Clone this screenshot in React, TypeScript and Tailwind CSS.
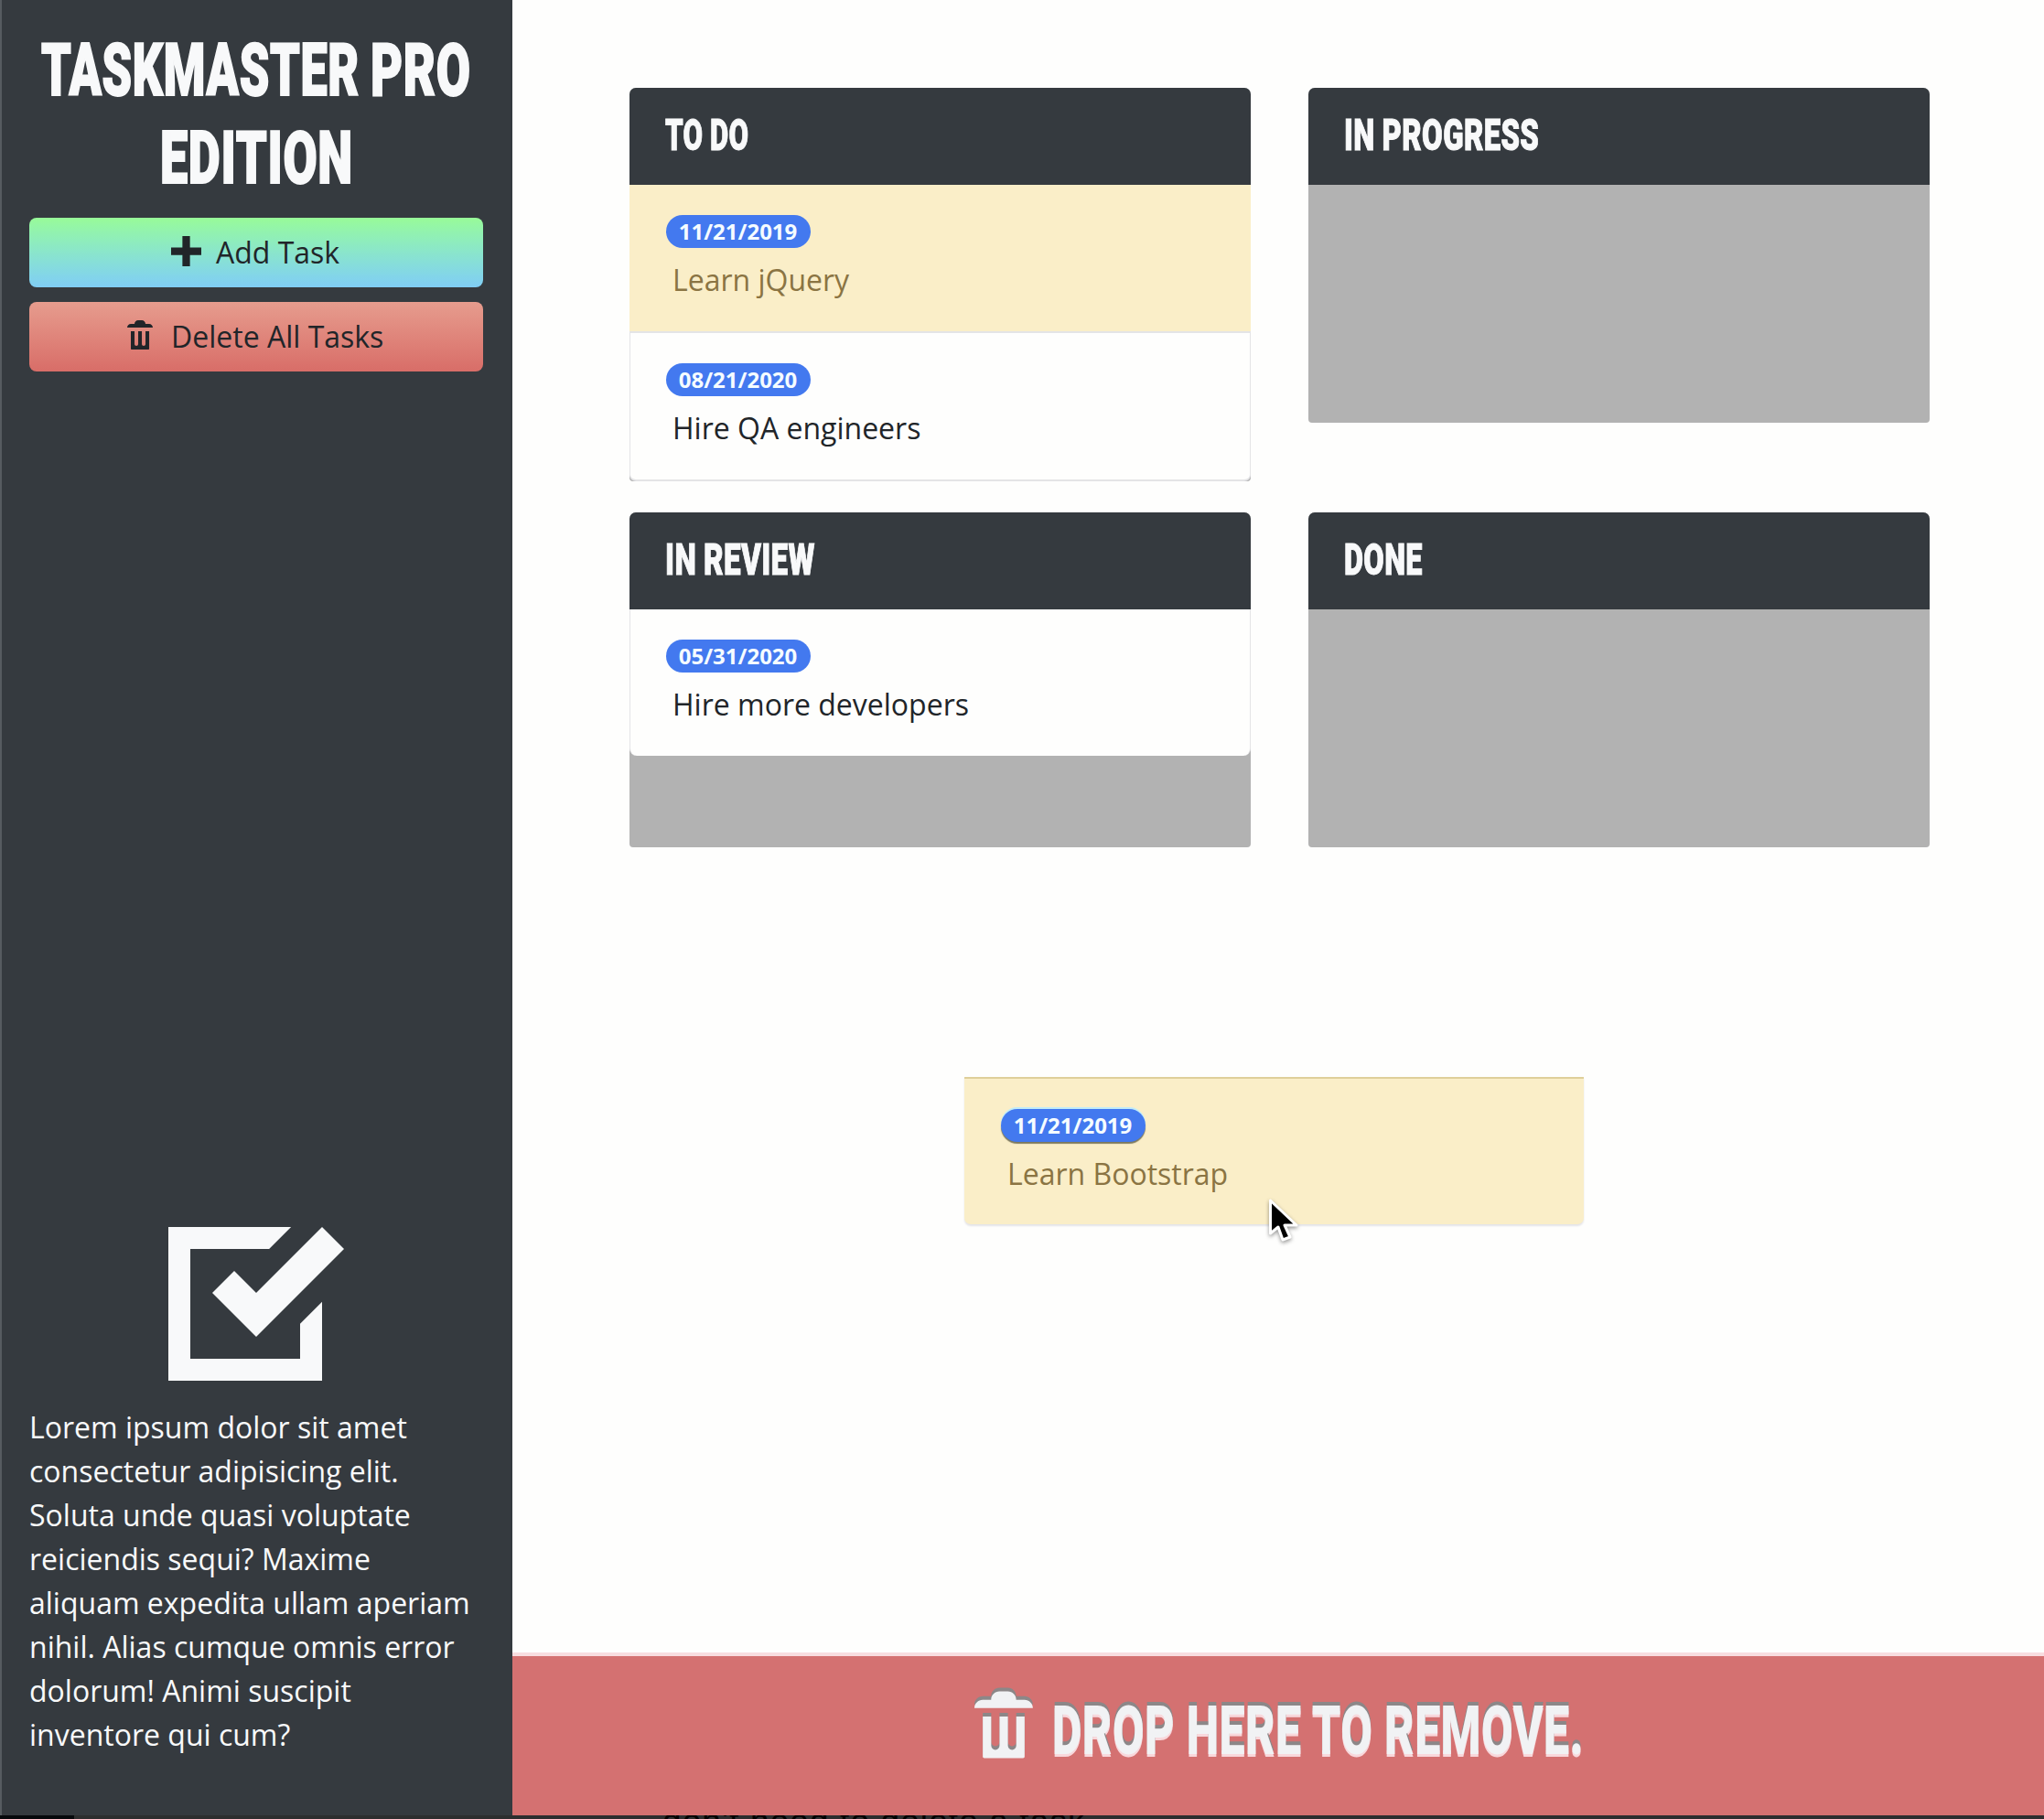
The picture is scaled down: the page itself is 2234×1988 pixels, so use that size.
import { useLayoutEffect, useRef, useState, type ReactNode } from "react";

/* Stretches or squeezes one line of display type to the width of its box. */
function Fit({ children, className = "" }: { children: ReactNode; className?: string }) {
  const box = useRef<HTMLSpanElement>(null);
  const text = useRef<HTMLSpanElement>(null);
  const [scale, setScale] = useState(0.6);
  useLayoutEffect(() => {
    if (box.current && text.current) {
      setScale(box.current.clientWidth / text.current.offsetWidth);
    }
  }, []);
  return (
    <span ref={box} className={`block whitespace-nowrap font-['Roboto',sans-serif] font-black ${className}`}>
      <span ref={text} className="inline-block origin-left" style={{ transform: `scaleX(${scale})` }}>
        {children}
      </span>
    </span>
  );
}

function TrashIcon({ className = "" }: { className?: string }) {
  return (
    <svg viewBox="0 0 8 8" fill="currentColor" className={className} aria-hidden="true">
      <path d="M3 0c-.55 0-1 .45-1 1h-1c-.55 0-1 .45-1 1h7c0-.55-.45-1-1-1h-1c0-.55-.45-1-1-1h-1zm-2 3v4.81c0 .11.08.19.19.19h4.63c.11 0 .19-.08.19-.19v-4.81h-1v3.5c0 .28-.22.5-.5.5s-.5-.22-.5-.5v-3.5h-1v3.5c0 .28-.22.5-.5.5s-.5-.22-.5-.5v-3.5h-1z" />
    </svg>
  );
}

function PlusIcon({ className = "" }: { className?: string }) {
  return (
    <svg viewBox="0 0 8 8" fill="currentColor" className={className} aria-hidden="true">
      <path d="M3 0v3h-3v2h3v3h2v-3h3v-2h-3v-3z" />
    </svg>
  );
}

function TaskIcon({ className = "" }: { className?: string }) {
  return (
    <svg viewBox="0 0 8 8" fill="currentColor" className={className} aria-hidden="true">
      <path d="M0 0v7h7v-3.59l-1 1v1.59h-5v-5h3.59l1-1h-5.59zm7 0l-3 3-1-1-1 1 2 2 4-4-1-1z" />
    </svg>
  );
}

function Task({ date, text, className, badge = "" }: { date: string; text: string; className: string; badge?: string }) {
  return (
    <li className={`pt-[33px] ${className}`}>
      <span
        className={`flex h-9 w-[158px] items-center justify-center rounded-full bg-[#4379ef] pr-px pb-px text-[24px] leading-none font-bold text-[#f5fcff] ${badge}`}
      >
        {date}
      </span>
      <p className="mt-[11px] ml-[7px] text-[32px] leading-[48px]">{text}</p>
    </li>
  );
}

function Column({ title, width, height, children }: { title: string; width: string; height: string; children?: ReactNode }) {
  return (
    <section className={`w-[679px] overflow-hidden rounded-t-[7px] rounded-b-[4px] bg-[#b2b2b2] ${height}`}>
      <h4 className="flex h-[106px] items-start bg-[#353a3f] pt-[23px] pl-[39px] text-[48px] leading-[58px] tracking-[0.5px] text-[#f8f9fa] [-webkit-text-stroke:1px_#f8f9fa] [word-spacing:-1px]">
        <Fit className={width}>{title}</Fit>
      </h4>
      <ul>{children}</ul>
    </section>
  );
}

const blurb = [
  "Lorem ipsum dolor sit amet",
  "consectetur adipisicing elit.",
  "Soluta unde quasi voluptate",
  "reiciendis sequi? Maxime",
  "aliquam expedita ullam aperiam",
  "nihil. Alias cumque omnis error",
  "dolorum! Animi suscipit",
  "inventore qui cum?",
];

export default function App() {
  return (
    <div className="relative flex h-[1988px] w-[2234px] flex-col overflow-hidden bg-[#fefefd] font-['Open_Sans',sans-serif] text-[#212529]">
      <div className="flex h-[1984px]">
        <aside className="flex w-[560px] flex-col border-l-2 border-[#565b60] bg-[#353a3f] pr-8 pl-[30px] text-[#f8f9fa]">
          <h1 className="flex h-[238px] flex-wrap content-start justify-center gap-x-3 pt-[29px] text-[79px] leading-[96px] tracking-[1px] text-[#f8f9fa] [-webkit-text-stroke:2px_#f8f9fa]">
            <Fit className="w-[348px]">TASKMASTER</Fit>
            <Fit className="w-[110px]">PRO</Fit>
            <Fit className="w-[211px]">EDITION</Fit>
          </h1>
          <button className="flex h-[76px] items-center rounded-lg bg-linear-to-b from-[#98fb98] to-[#80cdf5] pl-[155px] text-[32px] text-[#212529]">
            <PlusIcon className="mb-1 size-[33px]" />
            <span className="ml-4">Add Task</span>
          </button>
          <button className="mt-4 flex h-[76px] items-center rounded-lg bg-linear-to-b from-[#e69c8e] to-[#d86d68] pl-[107px] text-[32px] text-[#212529]">
            <TrashIcon className="mb-1 size-8" />
            <span className="ml-4">Delete All Tasks</span>
          </button>
          <div className="mt-auto mb-[64px]">
            <TaskIcon className="mx-auto h-[192px] w-[194px]" />
            <p className="mt-[3px] text-[32px] leading-[48px] whitespace-nowrap">
              {blurb.map((line) => (
                <span key={line} className="block">
                  {line}
                </span>
              ))}
            </p>
          </div>
        </aside>

        <div className="flex flex-1 flex-col">
          <main className="grid flex-1 auto-rows-min grid-cols-[679px_679px] items-start gap-x-[63px] gap-y-[34px] pt-[96px] pl-[128px]">
            <Column title="TO DO" width="w-[91px]" height="h-[430px]">
              <Task date="11/21/2019" text="Learn jQuery" className="h-[160px] bg-[#faeec8] pl-10 text-[#8a7443]" />
              <Task
                date="08/21/2020"
                text="Hire QA engineers"
                className="h-[164px] rounded-b-[7px] border-x border-y-2 border-[#e4e4e6] bg-[#fefefd] pl-[39px]"
              />
            </Column>
            <Column title="IN PROGRESS" width="w-[213px]" height="h-[366px]" />
            <Column title="IN REVIEW" width="w-[164px]" height="h-[366px]">
              <Task
                date="05/31/2020"
                text="Hire more developers"
                className="h-[160px] rounded-b-[8px] border-x border-[#e4e4e6] bg-[#fefefd] pl-[39px]"
              />
            </Column>
            <Column title="DONE" width="w-[86px]" height="h-[366px]" />
          </main>

          <footer className="flex h-[178px] items-start border-t-4 border-[#f8dde0] bg-[#d47171] pl-[505px] text-[#f1f2f4]">
            <TrashIcon className="mt-[38px] h-[74px] w-[73px] drop-shadow-[0_-4px_0_#8c8788]" />
            <Fit className="mt-[33px] ml-[12px] w-[581px] text-[74px] leading-[98px] tracking-[0.5px] text-shadow-[0_-4px_0_#8c8788,0_3px_0_#f8d8dc]">
              DROP HERE TO REMOVE.
            </Fit>
          </footer>
        </div>
      </div>

      <div className="flex h-1 overflow-hidden bg-[#2d2e2f]">
        <div className="h-1 w-[81px] bg-[#06090c]" />
        <p className="ml-[643px] text-[37px] leading-[40px] tracking-[1.1px] whitespace-nowrap text-black">
          <span className="-mt-[13px] block font-['Liberation_Sans',sans-serif]">don't need to delete a task</span>
        </p>
      </div>

      <ul className="absolute top-[1177px] left-[1054px] w-[677px]">
        <Task
          date="11/21/2019"
          text="Learn Bootstrap"
          className="h-[161px] rounded-b-[7px] border-t-2 border-[#dfcf9a] bg-[#faeec8] pl-10 text-[#8a7443] shadow-[0_2px_2px_#e4e4e8]"
          badge="shadow-[0_-2px_0_#c2ecf8,0_2px_1px_#7d7a60]"
        />
      </ul>

      <svg
        viewBox="20 14 44 60"
        className="absolute top-[1304px] left-[1380px] h-[60px] w-[44px] drop-shadow-[0_2px_2px_rgba(0,0,0,0.4)]"
        aria-hidden="true"
      >
        <path d="M28.500 22v36l8.500-7 5 14 8-3-6-13h13z" fill="#000" stroke="#fff" strokeWidth="3" strokeLinejoin="round" />
      </svg>
    </div>
  );
}
